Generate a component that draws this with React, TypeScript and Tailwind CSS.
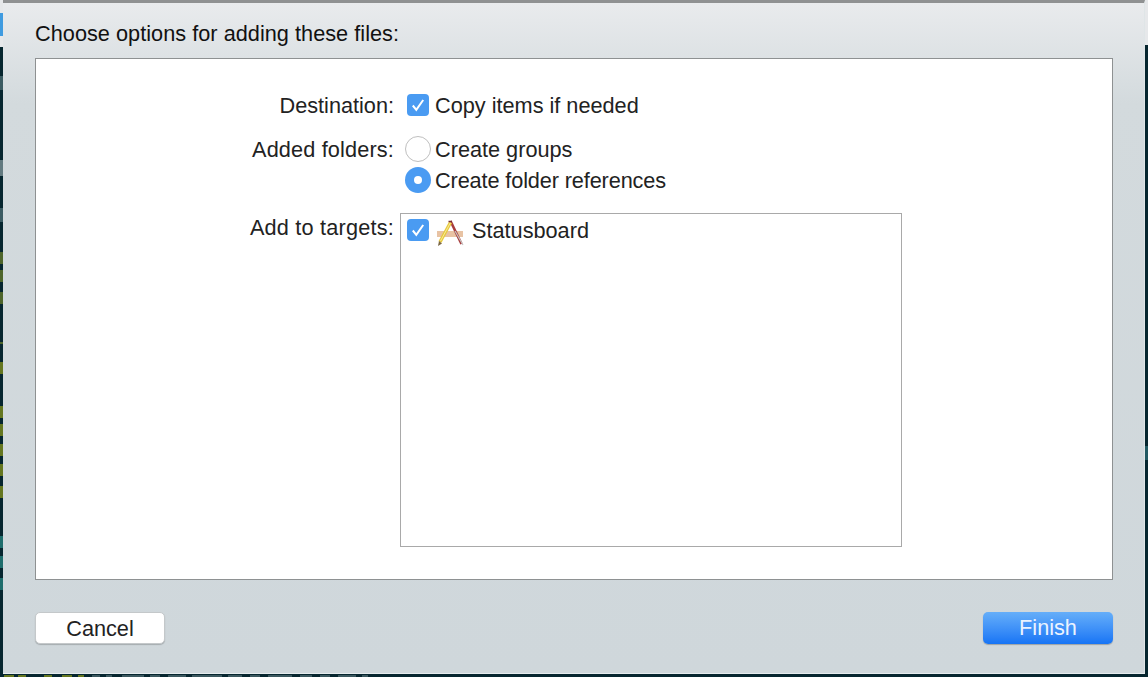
import React from 'react';

const font = { fontFamily: '"Liberation Sans", Arial, sans-serif' };

// scraps of the terminal showing behind the sheet, on its left edge
const scraps = [
  { top: 76, h: 14, c: 'bg-[#5f7f86]/60' },
  { top: 160, h: 16, c: 'bg-[#8a9ea3]/70' },
  { top: 208, h: 14, c: 'bg-[#5f7f86]/60' },
  { top: 252, h: 12, c: 'bg-[#7f8f2a]/60' },
  { top: 270, h: 12, c: 'bg-[#7f8f2a]/60' },
  { top: 292, h: 12, c: 'bg-[#7f8f2a]/60' },
  { top: 342, h: 2, c: 'bg-[#7f8f2a]/60' },
  { top: 362, h: 12, c: 'bg-[#8f9a1a]/70' },
  { top: 406, h: 12, c: 'bg-[#8f9a1a]/70' },
  { top: 424, h: 12, c: 'bg-[#8f9a1a]/70' },
  { top: 444, h: 12, c: 'bg-[#8f9a1a]/70' },
  { top: 464, h: 12, c: 'bg-[#8f9a1a]/70' },
  { top: 486, h: 12, c: 'bg-[#8f9a1a]/70' },
  { top: 536, h: 12, c: 'bg-[#2f9c96]/60' },
  { top: 556, h: 12, c: 'bg-[#2f9c96]/60' },
  { top: 578, h: 12, c: 'bg-[#2f9c96]/60' },
];

// same thing along the bottom edge: [left, width]
const bottomScraps: [number, number][] = [
  [4, 10], [18, 8], [44, 8], [62, 10], [78, 6],
];
const bottomGrey: [number, number][] = [
  [92, 8], [106, 6], [122, 22], [150, 10], [168, 18], [192, 30], [228, 14], [250, 10], [268, 24], [300, 12], [320, 10], [338, 18], [362, 6],
];

const Check = () => (
  <span className="flex h-[22px] w-[22px] shrink-0 items-center justify-center rounded-[4px] bg-[#4a9bf2]">
    <svg width="16" height="16" viewBox="0 0 16 16" fill="none">
      <path d="M2.8 8.5 L6.3 12.8 L13.2 3" stroke="white" strokeWidth="2" />
    </svg>
  </span>
);

const XcodeIcon = () => (
  <svg width="28" height="28" viewBox="0 0 28 28" className="shrink-0">
    <rect x="1" y="12" width="26" height="6" fill="#e8c3a4" />
    <path d="M14.5 2 L25.5 25" stroke="#a83c3c" strokeWidth="2.6" fill="none" />
    <path d="M19 12 L27 26" stroke="#c4c4c4" strokeWidth="1.2" fill="none" />
    <path d="M14.5 3.5 L4 23" stroke="#e6c93e" strokeWidth="3.4" fill="none" />
    <path d="M14.5 3.5 L4.5 22" stroke="#fff3b0" strokeWidth="0.8" fill="none" />
    <path d="M3 22 L2 27 L6 24.5 Z" fill="#7a6642" />
    <path d="M12.5 2.5 L16 2.5" stroke="#7d3030" strokeWidth="1.5" />
  </svg>
);

export default function App() {
  return (
    <div className="relative flex h-[677px] w-[1148px] overflow-hidden bg-[#06262f] pb-[3px] pl-[3px] pr-[3px]" style={font}>
      {scraps.map((s, i) => (
        <span key={i} className={`absolute left-0 w-[3px] ${s.c}`} style={{ top: s.top, height: s.h }} />
      ))}
      <span className="absolute left-0 top-0 h-[47px] w-[3px] bg-[#e6e8ea]" />
      <span className="absolute left-0 top-[13px] h-[23px] w-[3px] bg-[#3f9be0]" />
      <span className="absolute right-0 top-0 h-[45px] w-[3px] bg-[#e6e8ea]" />
      <span className="absolute right-0 top-[446px] h-[14px] w-[3px] bg-[#2f6f78]/70" />
      {bottomScraps.map(([l, w]) => (
        <span key={l} className="absolute bottom-0 h-[2px] bg-[#8f9a1a]/70" style={{ left: l, width: w }} />
      ))}
      {bottomGrey.map(([l, w]) => (
        <span key={l} className="absolute bottom-0 h-[2px] bg-[#6f8a90]/50" style={{ left: l, width: w }} />
      ))}

      <div className="flex w-full flex-col border-b border-r border-t-[3px] border-b-[#e6ecee] border-r-[#dfe5e7] border-t-[#8f9192] bg-gradient-to-b from-[#e9ebed] via-[#d3dadd] via-[15%] to-[#cfd7db] pl-[32px] pr-[31px]">
        <h1 className="mt-[20px] h-[22px] text-[21.7px] font-normal leading-[22px] tracking-[0.03px] text-[#111]">
          Choose options for adding these files:
        </h1>
        <div className="mt-[13px] h-[522px] border border-[#8e9192] bg-white">
          <div className="grid grid-cols-[358px_1fr] pt-[33px] text-[21.7px] leading-[24px] text-[#222]">
            <div className="mt-[2px] text-right">Destination:</div>
            <div className="ml-[13px] flex items-center gap-[6px]">
              <Check />
              <span className="mt-[2px]">Copy items if needed</span>
            </div>

            <div className="mt-[20px] text-right tracking-[0.15px]">Added folders:</div>
            <div className="ml-[11px] mt-[17px] flex items-center gap-[4px]">
              <span className="h-[26px] w-[26px] shrink-0 rounded-full border border-[#bfbfbf] bg-white" />
              <span className="mt-[2px]">Create groups</span>
            </div>

            <div />
            <div className="ml-[11px] mt-[5px] flex items-center gap-[4px]">
              <span className="flex h-[26px] w-[26px] shrink-0 items-center justify-center rounded-full bg-[#4a9bf2]">
                <span className="h-[8px] w-[8px] rounded-full bg-white" />
              </span>
              <span className="mt-[2px] tracking-[-0.12px]">Create folder references</span>
            </div>

            <div className="mt-[23px] text-right tracking-[0.2px]">Add to targets:</div>
            <div className="ml-[6px] mt-[20px] flex h-[334px] w-[502px] items-start gap-[7px] border border-[#a9a9a9] bg-white pl-[6px] pt-[5px]">
              <Check />
              <XcodeIcon />
              <span className="ml-[1px]">Statusboard</span>
            </div>
          </div>
        </div>
        <div className="mt-[32px] flex justify-between">
          <button className="h-[32px] w-[130px] rounded-[5px] border border-[#c4c8ca] bg-white pb-[4px] text-[21.7px] text-[#222] shadow-[0_1px_1px_rgba(0,0,0,0.2)]">
            Cancel
          </button>
          <button className="h-[32px] w-[130px] rounded-[5px] bg-gradient-to-b from-[#65aef9] to-[#1574f5] text-[21.7px] text-[#eaf3ff] shadow-[0_1px_1px_rgba(0,0,0,0.25)]">
            Finish
          </button>
        </div>
      </div>
    </div>
  );
}
